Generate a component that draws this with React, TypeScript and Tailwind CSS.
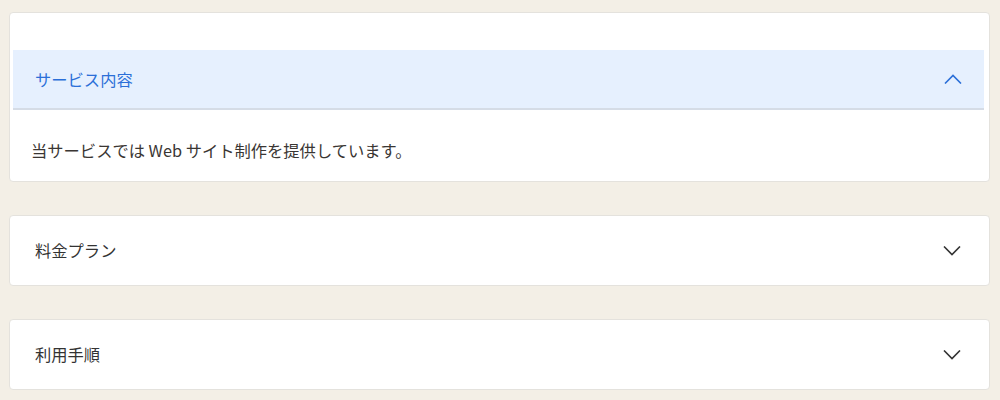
import { useState } from "react";

const items = [
  { id: 1, title: "サービス内容", body: "当サービスでは Web サイト制作を提供しています。" },
  { id: 2, title: "料金プラン", body: "" },
  { id: 3, title: "利用手順", body: "" },
];

const Chevron = ({ up, className }: { up?: boolean; className?: string }) => (
  <svg width="18" height="10" viewBox="0 0 18 10" fill="none" className={className}>
    <path
      d={up ? "M1 9.5L9 1.5L17 9.5" : "M1 0.5L9 8.5L17 0.5"}
      stroke="currentColor"
      strokeWidth="1.6"
    />
  </svg>
);

export default function App() {
  const [open, setOpen] = useState<number>(1);

  return (
    <div
      className="min-h-[400px] w-full bg-[#f3efe6] pl-[9px] pr-[10px] pt-[12px] pb-[10px] flex flex-col gap-[33px]"
      style={{ fontFamily: '"Noto Sans CJK JP", "Noto Sans", sans-serif' }}
    >
      {items.map((item) =>
        open === item.id ? (
          <div
            key={item.id}
            className="bg-white rounded-[4px] border border-[#e4e2dd] pt-[37px] pl-[3px] pr-[5px]"
          >
            <button
              className="w-full h-[60px] bg-[#e6f0fe] border-b-2 border-[#d5dce6] flex items-center justify-between pl-[22px] pr-[22px] text-[#2b6fd8] text-[16.3px]"
              onClick={() => setOpen(0)}
            >
              <span>{item.title}</span>
              <Chevron up className="text-[#2b6fd8]" />
            </button>
            <div className="pl-[18px] pt-[28px] pb-[19px] text-[16.3px] leading-[24px] text-[#3a3633]">
              {item.body}
            </div>
          </div>
        ) : (
          <button
            key={item.id}
            className="w-full h-[71px] bg-white rounded-[4px] border border-[#e4e2dd] flex items-center justify-between pl-[25px] pr-[28px] text-[16.3px] text-[#333] text-left"
            onClick={() => setOpen(item.id)}
          >
            <span>{item.title}</span>
            <Chevron className="text-[#333]" />
          </button>
        )
      )}
    </div>
  );
}
